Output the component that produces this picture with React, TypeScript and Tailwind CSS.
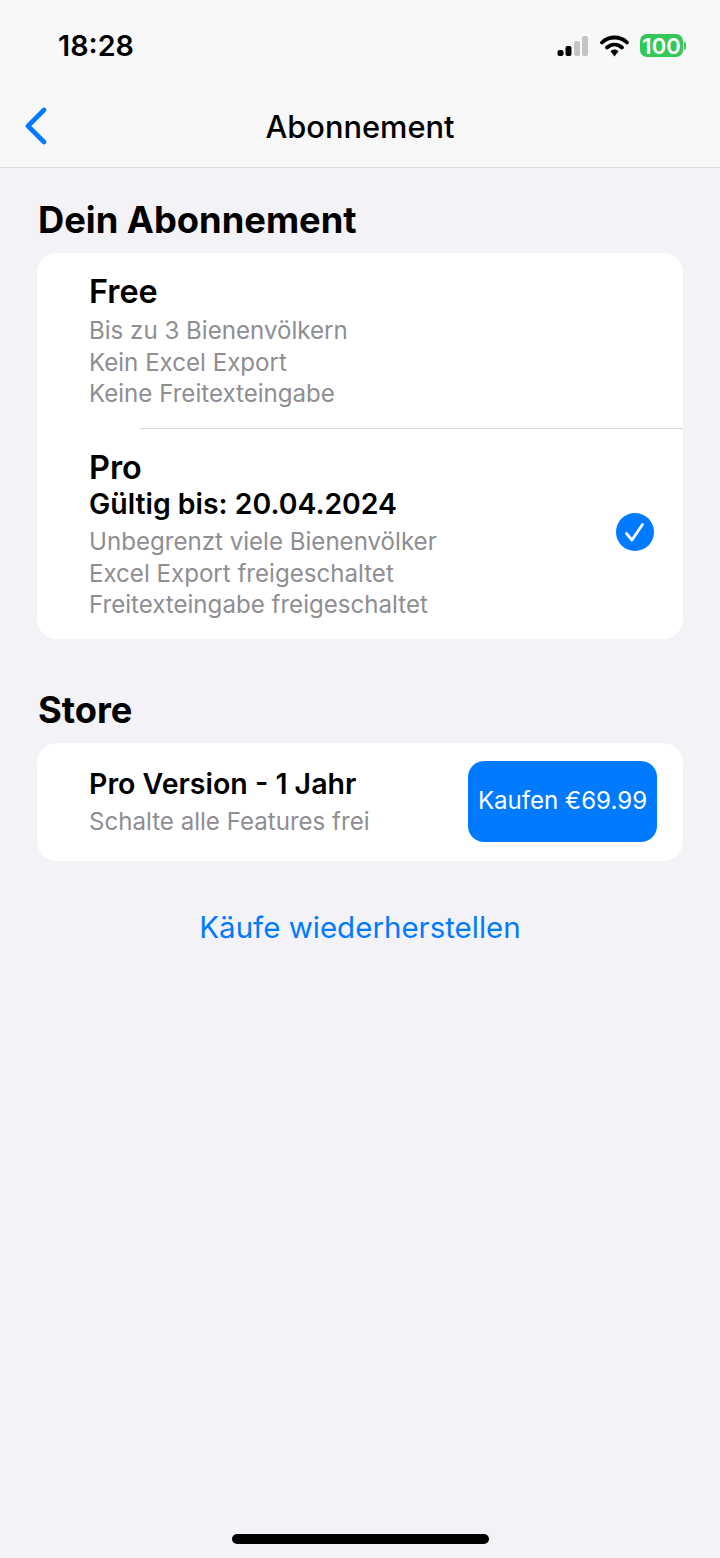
const font = { fontFamily: 'Inter, "Liberation Sans", sans-serif' };

function StatusIcons() {
  return (
    <div className="flex items-center">
      <svg width="32" height="24" viewBox="0 0 32 24" className="mr-[11px]">
        <rect x="0.5" y="16" width="6" height="6" rx="2" fill="#000" />
        <rect x="8.5" y="12" width="6" height="10" rx="2" fill="#000" />
        <rect x="17" y="7" width="6" height="15" rx="2" fill="#c4c4c4" />
        <rect x="25" y="2" width="6" height="20" rx="2" fill="#c4c4c4" />
      </svg>
      <svg width="30" height="24" viewBox="0 0 30 24" className="mr-[10px]">
        <path d="M2 8.5 C9 1.8 20 1.8 27 8.5" fill="none" stroke="#000" strokeWidth="3.8" strokeLinecap="round" />
        <path d="M7 13.5 C11.5 9.6 17.5 9.6 22 13.5" fill="none" stroke="#000" strokeWidth="3.8" strokeLinecap="round" />
        <path d="M10.5 17.2 C13 15 16 15 18.5 17.2 L14.5 22.5 Z" fill="#000" />
      </svg>
      <div className="flex items-center">
        <div className="flex h-[23px] w-[43px] items-center justify-center rounded-[7px] bg-[#34c759] text-[22px] font-semibold leading-none text-white">100</div>
        <div className="ml-[1px] h-[8px] w-[2px] rounded-r-full bg-[#34c759]" />
      </div>
    </div>
  );
}

function Secondary({ children }: { children: string }) {
  return <div className="h-[31.5px] text-[24.1px] leading-[31.5px] text-[#8e8e93]">{children}</div>;
}

export default function App() {
  return (
    <div style={font} className="flex h-[1558px] w-[720px] flex-col overflow-hidden bg-[#f2f2f7] text-black">
      <header className="h-[168px] shrink-0 border-b border-[#dcdcde] bg-[#f8f8f9]">
        <div className="flex h-[91px] items-center justify-between pl-[58px] pr-[34px]">
          <span className="text-[28.7px] font-semibold">18:28</span>
          <StatusIcons />
        </div>
        <div className="relative flex h-[73px] items-center justify-center">
          <svg width="24" height="38" viewBox="0 0 24 38" className="absolute left-[23px] top-[16px]">
            <path d="M21 3 L5 19 L21 35" fill="none" stroke="#007aff" strokeWidth="4.6" strokeLinecap="round" strokeLinejoin="round" />
          </svg>
          <span className="text-[30.8px] font-medium">Abonnement</span>
        </div>
      </header>

      <main className="flex flex-col px-[37px]">
        <h2 className="mt-[30px] h-[44px] pl-[1px] text-[36.3px] font-bold leading-[44px]">Dein Abonnement</h2>
        <section className="mt-[11px] h-[386px] rounded-[20px] bg-white">
          <div className="h-[175px] pl-[52px] pt-[21px]">
            <div className="h-[36px] text-[32.4px] font-semibold leading-[36px]">Free</div>
            <div className="mt-[5px]">
              <Secondary>Bis zu 3 Bienenvölkern</Secondary>
              <Secondary>Kein Excel Export</Secondary>
              <Secondary>Keine Freitexteingabe</Secondary>
            </div>
          </div>
          <div className="ml-[103px] h-px bg-[#d4d4d6]" />
          <div className="flex h-[210px] items-center justify-between pr-[29px]">
            <div className="self-start pl-[52px] pt-[21px]">
              <div className="h-[36px] text-[32.4px] font-semibold leading-[36px]">Pro</div>
              <div className="h-[36px] text-[28.4px] font-semibold leading-[36px]">Gültig bis: 20.04.2024</div>
              <div className="mt-[4px]">
                <Secondary>Unbegrenzt viele Bienenvölker</Secondary>
                <Secondary>Excel Export freigeschaltet</Secondary>
                <Secondary>Freitexteingabe freigeschaltet</Secondary>
              </div>
            </div>
            <svg width="38" height="38" viewBox="0 0 38 38" className="mb-[4px]">
              <circle cx="19" cy="19" r="19" fill="#007aff" />
              <path d="M10.5 20.5 L16 27 L26.5 11.5" fill="none" stroke="#fff" strokeWidth="2.8" strokeLinecap="round" strokeLinejoin="round" />
            </svg>
          </div>
        </section>

        <h2 className="mt-[49px] h-[44px] pl-[1px] text-[36.3px] font-bold leading-[44px]">Store</h2>
        <section className="mt-[11px] flex h-[118px] items-center justify-between rounded-[20px] bg-white pl-[52px] pr-[26px]">
          <div>
            <div className="h-[36px] text-[28.5px] font-semibold leading-[36px]">Pro Version - 1 Jahr</div>
            <div className="mt-[4px]">
              <Secondary>Schalte alle Features frei</Secondary>
            </div>
          </div>
          <button className="mb-[1px] flex h-[81px] w-[189px] items-center justify-center rounded-[16px] bg-[#007aff] text-[24.1px] text-white">Kaufen €69.99</button>
        </section>

        <div className="mt-[46px] text-center text-[29.5px] leading-[40px] text-[#007aff]">Käufe wiederherstellen</div>
      </main>

      <div className="mt-auto flex justify-center pb-[14px]">
        <div className="h-[10px] w-[257px] rounded-full bg-black" />
      </div>
    </div>
  );
}
